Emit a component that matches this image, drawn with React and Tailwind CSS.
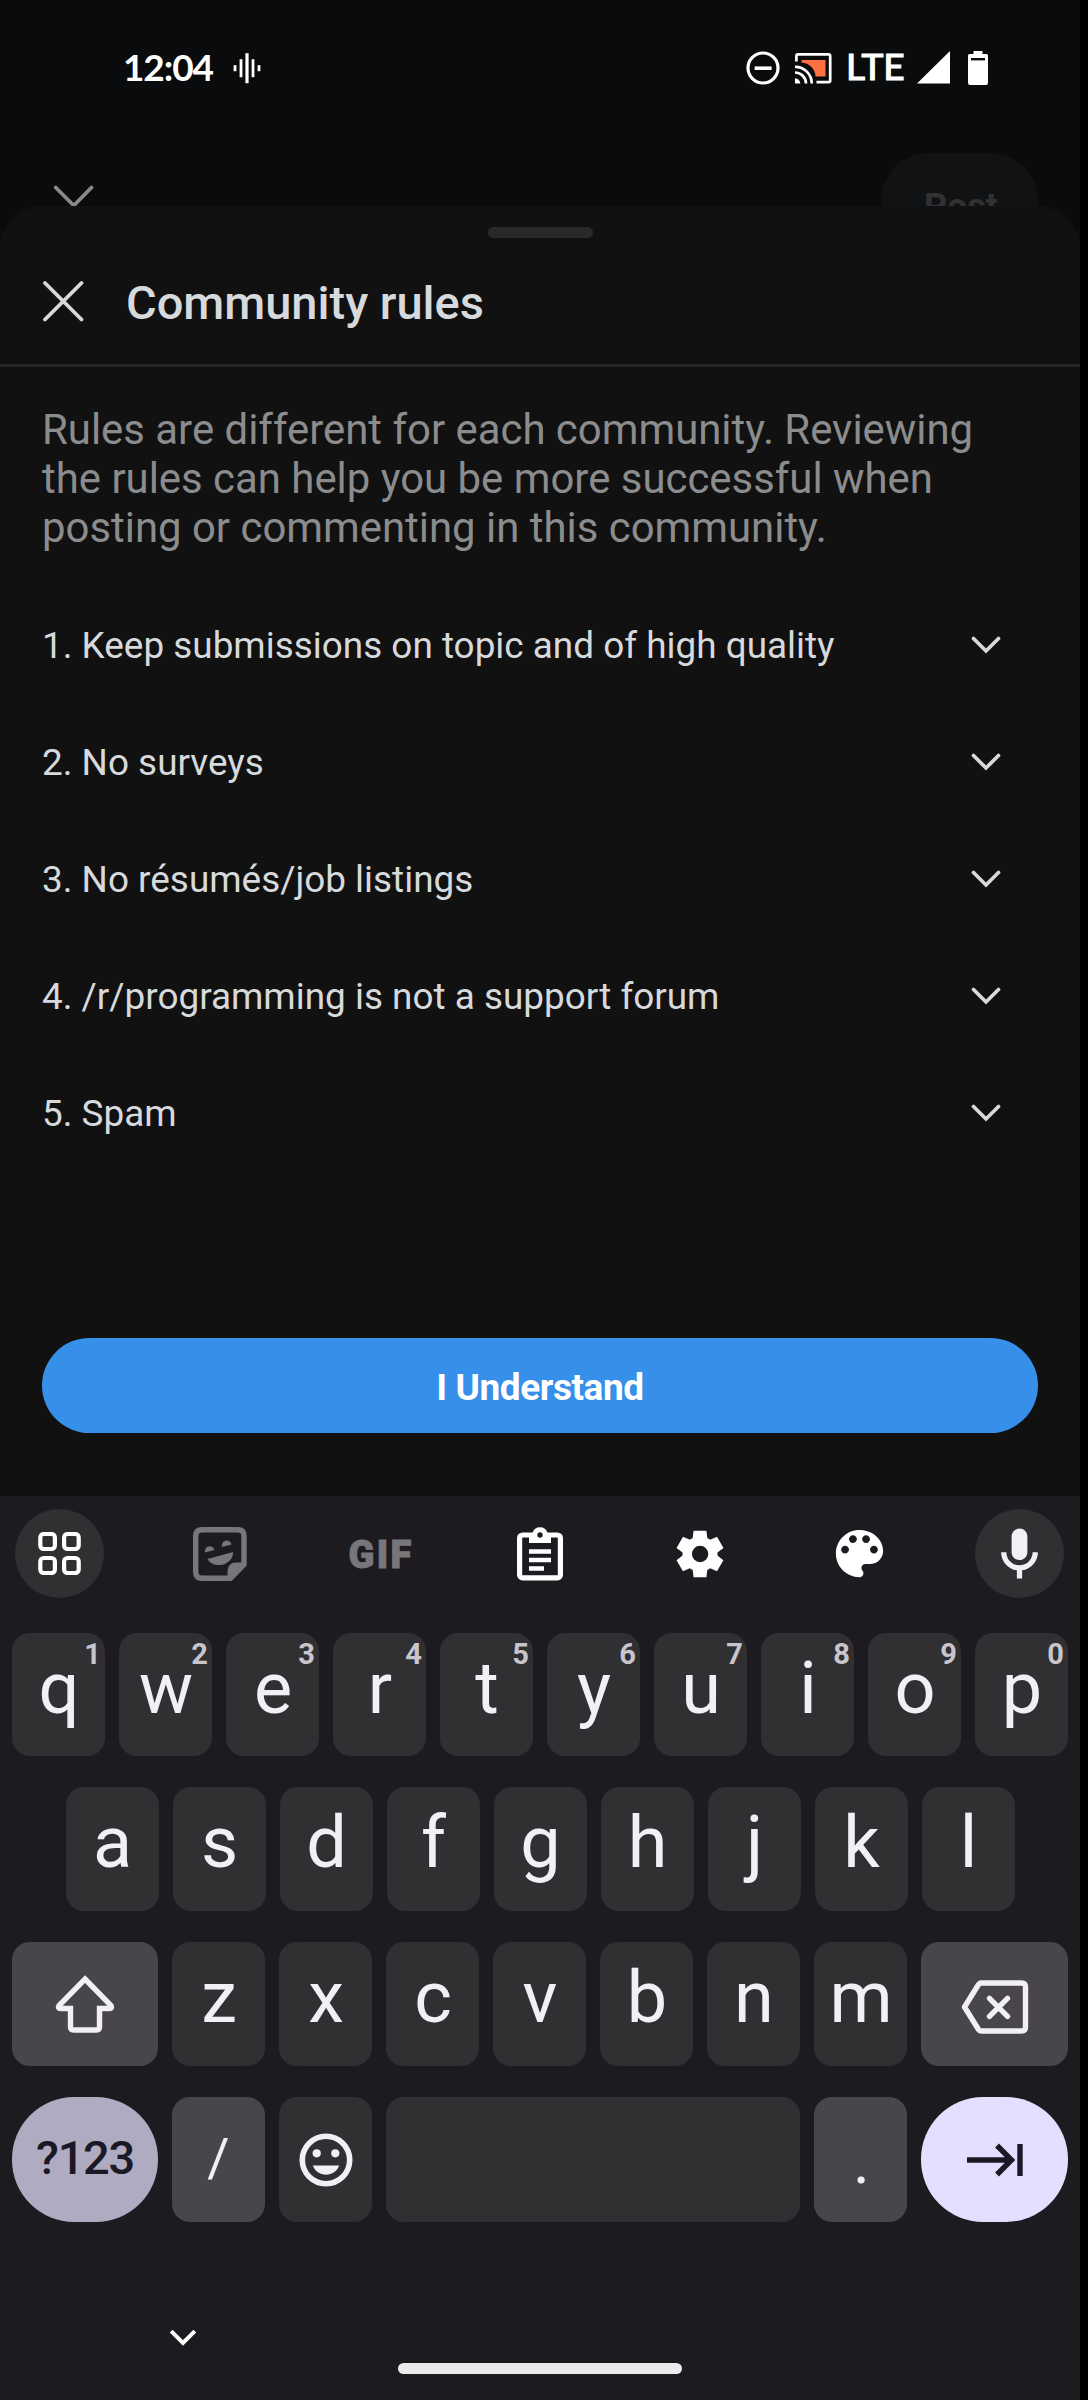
import React from "react";

const rules = [
  "1. Keep submissions on topic and of high quality",
  "2. No surveys",
  "3. No résumés/job listings",
  "4. /r/programming is not a support forum",
  "5. Spam",
];

const topRow = [
  ["q", "1"], ["w", "2"], ["e", "3"], ["r", "4"], ["t", "5"],
  ["y", "6"], ["u", "7"], ["i", "8"], ["o", "9"], ["p", "0"],
];

function StatusBar() {
  return (
    <div className="flex h-[135px] shrink-0 items-center pl-[123px] pr-[92px] text-white">
      <span className="mb-[2px] w-[92px] whitespace-nowrap font-['Lato'] text-[37px] font-bold leading-[40px] tracking-[-1.1px]">12:04</span>
      <svg className="ml-[17px]" width="30" height="32" viewBox="0 0 30 32" fill="currentColor">
        <rect x="1.6" y="13.2" width="2.8" height="6" />
        <rect x="7.6" y="7.2" width="2.8" height="18" />
        <rect x="13.4" y="1.2" width="3.2" height="30" />
        <rect x="19.6" y="7.2" width="2.8" height="18" />
        <rect x="25.6" y="13.2" width="2.8" height="6" />
      </svg>
      <div className="ml-auto flex items-center">
        <svg width="34" height="34" viewBox="0 0 34 34" fill="none" stroke="currentColor">
          <circle cx="17" cy="17" r="15" strokeWidth="3.2" />
          <path d="M8.6 17.2h17" strokeWidth="3.6" />
        </svg>
        <svg className="ml-[15px]" width="37" height="32" viewBox="0 0 37 32" fill="none" stroke="currentColor" strokeWidth="2.7">
          <path d="M6.5 8H30.500V24.500H20.500A15 15 0 0 0 6.500 10.500Z" fill="#ff7043" stroke="none" />
          <path d="M1.400 9.500V4Q1.400 2.400 3 2.400H33.500Q35.200 2.400 35.200 4V28.500Q35.200 30.200 33.500 30.200H21.500" />
          <path d="M0 14.800A16.500 16.500 0 0 1 16.700 31.500M0 20.500A11 11 0 0 1 11 31.500" />
          <path d="M0 26.200A5.500 5.500 0 0 1 5.300 31.500H0Z" fill="currentColor" stroke="none" />
        </svg>
        <span className="mb-[3px] ml-[14px] w-[62px] whitespace-nowrap font-['Lato'] text-[37px] leading-[40px] [-webkit-text-stroke:1.2px_white]">LTE</span>
        <svg className="ml-[9px]" width="33" height="33" viewBox="0 0 33 33" fill="currentColor"><path d="M33 0V32.500H0Z" /></svg>
        <svg className="ml-[18px]" width="20" height="34" viewBox="0 0 20 34">
          <path d="M5.500 0h9v3H18.500Q20 3 20 4.500V32Q20 34 18 34H2Q0 34 0 32V4.500Q0 3 1.500 3h4Z" fill="currentColor" />
          <rect x="3" y="7" width="14" height="2.400" fill="#090b0d" />
        </svg>
      </div>
    </div>
  );
}

function Chevron() {
  return (
    <svg className="mb-[2px]" width="30" height="18" viewBox="0 0 30 18" fill="none" stroke="#d7dadc" strokeWidth="3.700" strokeLinecap="round">
      <path d="M2.500 2.500L15 15L27.500 2.500" />
    </svg>
  );
}

function Sheet() {
  return (
    <section className="flex h-[1290px] shrink-0 flex-col rounded-t-[42px] bg-[#111111] font-['Roboto',sans-serif]">
      <div className="mx-auto mt-[21px] h-[11px] w-[105px] shrink-0 rounded-full bg-[#292929]" />
      <header className="flex h-[129px] shrink-0 items-center border-b-[3px] border-[#262626] pl-[42px]">
        <svg className="mb-[1px]" width="42" height="42" viewBox="0 0 42 42" fill="none" stroke="#d7dadc" strokeWidth="3.800" strokeLinecap="round">
          <path d="M3 3L39.500 39.500M39.500 3L3 39.500" />
        </svg>
        <h1 className="ml-[42px] mt-[3px] text-[47px] font-medium leading-[52px] text-[#d7dadc]">Community rules</h1>
      </header>
      <p className="mt-[38px] whitespace-nowrap pl-[42px] text-[41.900px] leading-[49px] text-[#8a8c8d]">
        Rules are different for each community. Reviewing<br />
        the rules can help you be more successful when<br />
        posting or commenting in this community.
      </p>
      <ul className="mt-[35px]">
        {rules.map((rule) => (
          <li key={rule} className="flex h-[117px] items-center justify-between pl-[42px] pr-[79px] text-[36.900px] text-[#d7dadc]">
            <span>{rule}</span>
            <Chevron />
          </li>
        ))}
      </ul>
      <button className="mx-[42px] mt-auto mb-[63px] flex h-[95px] items-center justify-center rounded-full bg-[#368fe9] pt-[4px] text-[37px] font-bold tracking-[-0.400px] text-white">I Understand</button>
    </section>
  );
}

function Toolbar() {
  return (
    <div className="flex h-[137px] shrink-0 items-start justify-between pl-[15px] pr-[16px] pt-[13px] text-white">
      <div className="flex size-[89px] items-center justify-center rounded-full bg-[#303033]">
        <svg width="43" height="43" viewBox="0 0 43 43" fill="none" stroke="currentColor" strokeWidth="4.200">
          <rect x="2.300" y="2" width="14.600" height="15" rx="3.500" />
          <rect x="26.100" y="2" width="14.600" height="15" rx="3.500" />
          <rect x="2.300" y="26" width="14.600" height="15" rx="3.500" />
          <rect x="26.100" y="26" width="14.600" height="15" rx="3.500" />
        </svg>
      </div>
      <div className="flex h-[89px] w-[89px] items-center justify-center text-[#77767a]">
        <svg width="54" height="54" viewBox="0 0 54 54" fill="none">
          <path d="M51 37.500V9Q51 2.700 45 2.700H9Q2.700 2.700 2.700 9V45Q2.700 51.300 9 51.300H37.500Z" stroke="currentColor" strokeWidth="5.400" />
          <path d="M34.500 53V45Q34.500 35.500 43 35.500H53.500L37 53Z" fill="currentColor" />
          <path d="M12 25.500A4.900 5 0 1 1 21.500 23ZM29 20A4.900 5 0 1 1 38.500 17.600ZM14.500 32L40 25C40.500 31 36 36 29.500 37.700C23 39 17.500 37 14.500 32Z" fill="currentColor" />
        </svg>
      </div>
      <div className="flex h-[89px] w-[89px] items-center justify-center pl-[3px] pt-[3px]">
        <span className="text-[38px] font-black leading-none tracking-[2.200px] text-[#77767a] [-webkit-text-stroke:1px_#77767a]">GIF</span>
      </div>
      <div className="flex h-[89px] w-[89px] items-center justify-center">
        <svg width="46" height="54" viewBox="0 0 46 54" fill="none">
          <rect x="2.600" y="8" width="40.800" height="42.800" rx="3" stroke="currentColor" strokeWidth="5.200" />
          <path d="M12 6H15.500A7.800 7.800 0 0 1 30.500 6H34V16H12Z" fill="currentColor" />
          <path d="M12 24.500H34M12 33H34M12 41.500H27" stroke="currentColor" strokeWidth="4.300" />
          <circle cx="23" cy="8" r="2.700" fill="#1d1b20" />
        </svg>
      </div>
      <div className="flex h-[89px] w-[89px] items-center justify-center">
        <svg width="56" height="56" viewBox="0 0 24 24" fill="currentColor">
          <path d="m9.250 22-.4-3.200q-.325-.125-.612-.3-.288-.175-.563-.375L4.700 19.375l-2.750-4.750 2.575-1.950Q4.500 12.500 4.500 12.337v-.675q0-.162.025-.337L1.950 9.375l2.750-4.750 2.975 1.250q.275-.2.575-.375.3-.175.6-.3l.4-3.200h5.500l.4 3.200q.325.125.613.3.287.175.562.375l2.975-1.250 2.750 4.750-2.575 1.950q.025.175.025.337v.675q0 .163-.05.338l2.575 1.950-2.750 4.750-2.950-1.250q-.275.2-.575.375-.3.175-.6.3l-.4 3.200Zm2.800-6.500q1.450 0 2.475-1.025Q15.550 13.450 15.550 12q0-1.450-1.025-2.475Q13.500 8.500 12.050 8.500q-1.475 0-2.488 1.025Q8.550 10.550 8.550 12q0 1.450 1.012 2.475Q10.575 15.500 12.050 15.500Z" />
        </svg>
      </div>
      <div className="flex h-[89px] w-[89px] items-center justify-center">
        <svg width="63" height="63" viewBox="0 0 24 24" fill="currentColor">
          <path d="M12 3c-4.970 0-9 4.030-9 9s4.030 9 9 9c.83 0 1.500-.67 1.500-1.500 0-.39-.15-.74-.39-1.010-.23-.26-.38-.61-.38-.99 0-.83.67-1.500 1.500-1.500H16c2.760 0 5-2.240 5-5 0-4.420-4.030-8-9-8zm-5.500 9c-.83 0-1.500-.67-1.500-1.500S5.670 9 6.500 9 8 9.670 8 10.500 7.330 12 6.500 12zm3-4C8.670 8 8 7.330 8 6.500S8.670 5 9.500 5s1.500.67 1.500 1.500S10.330 8 9.500 8zm5 0c-.83 0-1.500-.67-1.500-1.500S13.670 5 14.500 5s1.500.67 1.500 1.500S15.330 8 14.500 8zm3 4c-.83 0-1.500-.67-1.500-1.500S16.670 9 17.500 9s1.500.67 1.500 1.500-.67 1.500-1.500 1.500z" />
        </svg>
      </div>
      <div className="flex size-[89px] items-center justify-center rounded-full bg-[#303033] text-[#f2eff5]">
        <svg width="63" height="63" viewBox="0 0 24 24" fill="currentColor">
          <path d="M12 14.500c1.660 0 3-1.340 3-3v-6c0-1.660-1.340-3-3-3S9 3.840 9 5.500v6c0 1.660 1.340 3 3 3zm5-3c0 2.760-2.240 5-5 5s-5-2.240-5-5H5c0 3.530 2.610 6.430 6 6.920V21.500h2v-3.080c3.390-.49 6-3.390 6-6.920h-2z" />
        </svg>
      </div>
    </div>
  );
}

function LetterKey({ letter, hint }) {
  return (
    <div className="relative flex h-full w-[93px] justify-center rounded-[18px] bg-[#303033] pl-px pt-[13px] text-[72px] leading-[86px] text-[#f2eff5]">
      {letter}
      {hint && <span className="absolute right-[4px] top-[5px] text-[29px] font-bold leading-[32px] text-[#c9c5cd]">{hint}</span>}
    </div>
  );
}

function Keyboard() {
  return (
    <section className="flex h-[904px] flex-col bg-[#1d1b20] font-['Roboto',sans-serif]">
      <Toolbar />
      <div className="flex h-[123px] shrink-0 gap-[14px] px-3">
        {topRow.map(([l, n]) => <LetterKey key={l} letter={l} hint={n} />)}
      </div>
      <div className="mt-[31px] flex h-[124px] shrink-0 justify-center gap-[14px]">
        {[..."asdfghjkl"].map((l) => <LetterKey key={l} letter={l} />)}
      </div>
      <div className="mt-[31px] flex h-[124px] shrink-0 gap-[14px] px-3">
        <div className="flex w-[146px] items-center justify-center rounded-[18px] bg-[#49454c]">
          <svg width="60" height="60" viewBox="0 0 60 60" fill="none" stroke="#f2eff5" strokeWidth="5.400">
            <path d="M30 5L56 31.500Q57.500 34.500 54.500 34.500H44.500V53Q44.500 56 41.500 56H18.500Q15.500 56 15.500 53V34.500H5.500Q2.500 34.500 4 31.500Z" />
          </svg>
        </div>
        {[..."zxcvbnm"].map((l) => <LetterKey key={l} letter={l} />)}
        <div className="flex w-[147px] items-center justify-center rounded-[18px] bg-[#49454c]">
          <svg className="mt-[5px]" width="68" height="54" viewBox="0 0 68 54" fill="none" stroke="#f2eff5" strokeWidth="5.400" strokeLinejoin="round">
            <path d="M19.500 3H60.500Q64.500 3 64.500 7V47Q64.500 51 60.500 51H20.500Q18.500 51 17.500 49.500L3.500 27L17.500 4.500Q18.500 3 20.500 3Z" />
            <path d="M28.500 18.300L46.500 36.300M46.500 18.300L28.500 36.300" strokeLinecap="round" />
          </svg>
        </div>
      </div>
      <div className="mt-[31px] flex h-[125px] shrink-0 gap-[14px] px-3">
        <div className="flex w-[146px] items-center justify-center rounded-[62px] bg-[#afabc1] pb-[3px] text-[47px] font-medium tracking-[-1.300px] text-[#1b1926]">?123</div>
        <div className="flex w-[93px] items-center justify-center rounded-[18px] bg-[#49454c] pb-[5px] text-[54px] text-[#f2eff5]">/</div>
        <div className="flex w-[93px] items-center justify-center rounded-[18px] bg-[#303033]">
          <svg width="54" height="54" viewBox="0 0 54 54" fill="#f2eff5">
            <circle cx="27" cy="27" r="23.700" fill="none" stroke="#f2eff5" strokeWidth="5.600" />
            <circle cx="17.700" cy="20.300" r="4.100" />
            <circle cx="36.300" cy="20.300" r="4.100" />
            <path d="M13.800 32.500H40.200C38 38.500 33 41.700 27 41.700S16 38.500 13.800 32.500Z" />
          </svg>
        </div>
        <div className="w-[414px] rounded-[18px] bg-[#303033]" />
        <div className="flex w-[93px] justify-center rounded-[18px] bg-[#49454c] pl-[2px] pt-[22px] text-[64px] leading-[86px] text-[#f2eff5]">.</div>
        <div className="flex w-[147px] items-center justify-center rounded-[62px] bg-[#e5deff]">
          <svg width="58" height="34" viewBox="0 0 58 34" fill="none" stroke="#1b1926" strokeWidth="5.400">
            <path d="M1 17H46M31 2.500L45.500 17L31 31.500M54 1V33" />
          </svg>
        </div>
      </div>
      <div className="mt-auto flex h-[71px] shrink-0 items-start pl-[169px]">
        <svg width="28" height="18" viewBox="0 0 28 18" fill="none" stroke="white" strokeWidth="4">
          <path d="M2.200 2.200L14 14L25.800 2.200" />
        </svg>
        <div className="ml-[201px] mt-[34px] h-[11px] w-[284px] rounded-full bg-[#ececec]" />
      </div>
    </section>
  );
}

export default function App() {
  return (
    <main className="h-[2400px] w-[1088px] overflow-hidden bg-black">
      <div className="flex h-full w-[1080px] flex-col bg-[#090b0d]">
        <div className="flex h-[206px] shrink-0 flex-col overflow-hidden">
          <StatusBar />
          <div className="flex items-start justify-between pl-[53px] pr-[42px] pt-[18px] font-['Roboto',sans-serif]">
            <svg className="mt-[31px]" width="42" height="26" viewBox="0 0 42 26" fill="none" stroke="#88898b" strokeWidth="3.800" strokeLinecap="round">
              <path d="M2.700 3.500L20.800 21.500L38.500 3.500" />
            </svg>
            <div className="flex h-[95px] w-[157px] justify-center rounded-full bg-[#111214] pl-[3px] pt-[32px] text-[36px] font-bold leading-[44px] text-[#303132]">Post</div>
          </div>
        </div>
        <Sheet />
        <Keyboard />
      </div>
    </main>
  );
}
